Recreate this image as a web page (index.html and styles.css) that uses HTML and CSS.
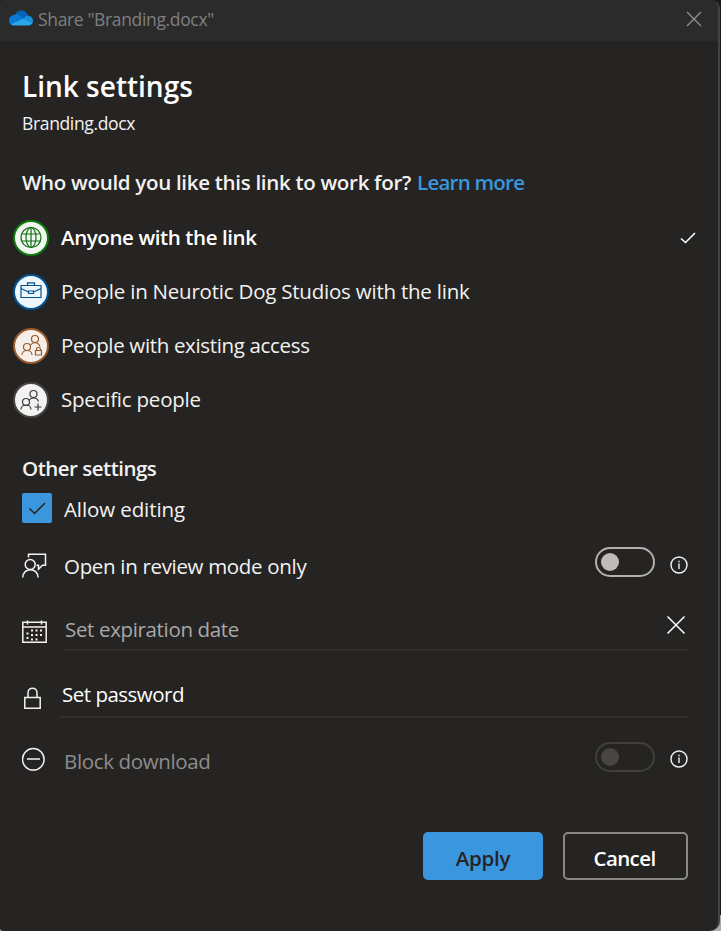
FILE: index.html
```html
<!DOCTYPE html>
<html lang="en">
<head>
<meta charset="utf-8">
<title>Share "Branding.docx"</title>
<link rel="stylesheet" href="styles.css">
</head>
<body>
<main class="dialog">
  <header class="titlebar">
    <svg class="cloud" viewBox="0 0 24 16" width="24" height="16">
      <path d="M6 5.200C7.300 2 9.500.5 12.500.5c3.200 0 5.800 1.900 6.500 5.300L14 10 5 7z" fill="#0563b8"/>
      <path d="M5.500 4.800c2.200-.5 4 .1 5.800 1.300l5 3.100L4 15.200C1.500 15 0 13 0 10.400 0 7.500 2.300 5.200 5.500 4.800z" fill="#0a7ad6"/>
      <path d="M14 9l3.500-3.200c3.500-.8 6.500 1.700 6.500 4.900 0 1-.2 1.800-.6 2.500z" fill="#1490df"/>
      <path d="M2 14.200L14.200 8.800l9.300 4.200c-.8 1.500-2.100 2.500-4 2.500h-14c-1.400 0-2.600-.5-3.500-1.300z" fill="#28a8ea"/>
    </svg>
    <span class="window-title">Share "Branding.docx"</span>
    <svg class="close" viewBox="0 0 16 16" width="16" height="16"><path d="M1 1l14 14M15 1L1 15"/></svg>
  </header>

  <section class="content">
    <h1>Link settings</h1>
    <p class="file">Branding.docx</p>
    <h2 class="question"><span class="ask">Who would you like this link to work for?</span><a class="learn">Learn more</a></h2>

    <ul class="options">
      <li class="option selected">
        <svg class="badge green" viewBox="0 0 36 36" width="36" height="36">
          <circle class="disc" cx="18" cy="18" r="17"/>
          <circle cx="18" cy="17.500" r="10"/><ellipse cx="18" cy="17.500" rx="5" ry="10"/>
          <path d="M9 14h18M9 21h18M18 7.500v20"/>
        </svg>
        <span class="t-anyone">Anyone with the link</span>
        <svg class="tick" viewBox="0 0 16 12" width="16" height="12"><path d="M1 6.500l4.500 4L15 1"/></svg>
      </li>
      <li class="option">
        <svg class="badge blue" viewBox="0 0 36 36" width="36" height="36">
          <circle class="disc" cx="18" cy="18" r="17"/>
          <path d="M8 11.500h20v12H8zM14.500 11.500V8.800h7v2.700M8 14.500l7.500 3.500M28 14.500L20.500 18M15.500 17h5v2.500h-5z"/>
        </svg>
        <span class="t-org">People in Neurotic Dog Studios with the link</span>
      </li>
      <li class="option">
        <svg class="badge brown" viewBox="0 0 36 36" width="36" height="36">
          <circle class="disc" cx="18" cy="18" r="17"/>
          <circle cx="22" cy="11" r="3.500"/><circle cx="14" cy="19" r="3.500"/>
          <path d="M9 27c0-6 10-6 10 0M17.500 17c2-3 8-3.500 9.500 1.500M22.500 22.500h6v4.500h-6zM23.500 22.500v-1.500c0-2 4-2 4 0v1.500"/>
        </svg>
        <span class="t-existing">People with existing access</span>
      </li>
      <li class="option">
        <svg class="badge gray" viewBox="0 0 36 36" width="36" height="36">
          <circle class="disc" cx="18" cy="18" r="17"/>
          <circle cx="20.500" cy="12" r="3.500"/><circle cx="13" cy="20" r="3.500"/>
          <path d="M8 27.500c0-6 10-6 10 0M16 18.500c2-3.500 8-3.500 9.500 1M25 21.500v7M21.500 25h7"/>
        </svg>
        <span class="t-specific">Specific people</span>
      </li>
    </ul>

    <h2 class="other">Other settings</h2>
    <div class="row allow">
      <span class="checkbox"><svg viewBox="0 0 18 14" width="18" height="14"><path d="M1.500 7.500l5 5L17 2"/></svg></span>
      <span class="t-allow">Allow editing</span>
    </div>
    <div class="row review">
      <svg class="icon" viewBox="0 0 26 26" width="26" height="26">
        <circle cx="8.200" cy="11.500" r="5"/>
        <path d="M.8 24.500c0-10.500 15.200-10.500 15.200 0M6.500 4.500V1.300h17v11h-3l-4 4v-4h-2"/>
      </svg>
      <span class="label t-open">Open in review mode only</span>
      <span class="toggle"></span>
      <svg class="info" viewBox="0 0 18 18" width="18" height="18"><circle cx="9" cy="9" r="8"/><path d="M9 7.500v5.500M9 4.700v1.500"/></svg>
    </div>
    <div class="row expiry">
      <svg class="icon" viewBox="0 0 26 26" width="26" height="26">
        <path d="M.8 3.300h23.400v20H.8zM.8 8h23.400M5.500 1.500v4M19.500 1.500v4"/>
        <path class="days" d="M5.500 13.500v8M10 10.500v11M14.500 10.500v11M19 10.500v8"/>
      </svg>
      <div class="field"><span class="label t-exp">Set expiration date</span>
        <svg class="clear" viewBox="0 0 20 20" width="20" height="20"><path d="M1.500 1.500l17 17M18.500 1.500l-17 17"/></svg>
      </div>
    </div>
    <div class="row password">
      <svg class="icon" viewBox="0 0 26 26" width="26" height="26"><path d="M2.800 11.500h15.400v10.700H2.800zM6 11.500V7c0-6.500 9-6.500 9 0v4.500"/></svg>
      <div class="field"><span class="label t-pass">Set password</span></div>
    </div>
    <div class="row block">
      <svg class="icon" viewBox="0 0 26 26" width="26" height="26"><circle cx="11.300" cy="12.300" r="10.800"/><path d="M5 12h13"/></svg>
      <span class="label t-block">Block download</span>
      <span class="toggle disabled"></span>
      <svg class="info" viewBox="0 0 18 18" width="18" height="18"><circle cx="9" cy="9" r="8"/><path d="M9 7.500v5.500M9 4.700v1.500"/></svg>
    </div>

    <footer class="actions">
      <button class="btn primary">Apply</button>
      <button class="btn secondary">Cancel</button>
    </footer>
  </section>
</main>
</body>
</html>
```
FILE: styles.css
```css
* { box-sizing: border-box; }
body {
  margin: 0;
  height: 931px;
  overflow: hidden;
  background: linear-gradient(#1a1a1a 915px, #aaa 915px);
  font-family: "Open Sans", "Noto Sans", sans-serif;
  font-size: 20.500px;
  color: #f3f2f1;
  white-space: nowrap;
}
h1, h2, p, ul { margin: 0; padding: 0; font-size: inherit; }
svg { fill: none; stroke: #f3f2f1; stroke-width: 1.500; flex: none; }

.dialog {
  width: 720px;
  height: 931px;
  background: #252423;
  border-right: 2px solid #434343;
  border-radius: 3px 9px 10px 3px;
  overflow: hidden;
}
.titlebar {
  height: 41px;
  display: flex;
  align-items: center;
  padding: 0 16px 3px 9px;
  background: #2b2b2b;
  color: #7f7f7f;
  font-size: 17.500px;
  letter-spacing: -.35px;
}
.cloud { stroke: none; margin: -2px 5px 0 0; }
.close { margin-left: auto; margin-top: -1px; stroke: #919191; stroke-width: 1.300; }
.content { padding: 25px 30px 0 22px; }
h1 { height: 40px; line-height: 40px; font-size: 28px; font-weight: 600; color: #fff; }
.file { height: 25px; margin-top: 5px; line-height: 25px; font-size: 17.500px; letter-spacing: -.35px; }
.question { display: flex; gap: 6px; height: 30px; margin-top: 31px; line-height: 30px; font-weight: 600; }
.ask { letter-spacing: -.3px; }
.learn { color: #3a96dd; letter-spacing: -.75px; }

.options { list-style: none; margin: 14px 0 0 -9px; }
.option { display: flex; align-items: center; gap: 12px; height: 54px; }
.option span { position: relative; top: -1px; }
.selected { font-weight: 600; color: #fff; }
.t-anyone { letter-spacing: -.4px; }
.t-org { letter-spacing: -.22px; }
.t-existing { letter-spacing: -.34px; }
.t-specific { letter-spacing: -.22px; }
.tick { margin-left: auto; margin-right: -8px; stroke: #fff; }
.badge { stroke-width: 1.200; }
.disc { stroke-width: 2; }
.green { stroke: #0f6f10; } .green .disc { fill: #f1f6f1; stroke: #107c10; }
.blue { stroke: #005495; } .blue .disc { fill: #eff6fc; }
.brown { stroke: #96592c; } .brown .disc { fill: #f6efe9; }
.gray { stroke: #393939; } .gray .disc { fill: #f3f2f1; stroke: #484644; }

.other { height: 28px; margin-top: 27px; line-height: 28px; font-weight: 600; letter-spacing: -.5px; }
.row { display: flex; align-items: center; }
.allow { height: 52px; gap: 12px; }
.t-allow { margin-top: 1px; letter-spacing: -.1px; }
.checkbox { width: 30px; height: 30px; margin-top: -1px; border-radius: 2px; background: #3a96dd; display: grid; place-items: center; }
.checkbox svg { stroke: #252423; }
.icon { margin-right: 16px; }
.review { height: 64px; }
.t-open { letter-spacing: -.32px; }
.toggle { width: 60px; height: 30px; margin: -8px 15px 0 auto; border: 2px solid #b3b1af; border-radius: 15px; display: flex; align-items: center; padding-left: 4px; }
.toggle::before { content: ""; width: 18px; height: 18px; border-radius: 50%; background: #bebbb8; }
.disabled { border-color: #403f3d; margin-top: -6px; }
.disabled::before { background: #484644; }
.info { margin: -3px .5px 0 -.5px; stroke-width: 1.400; }
.t-exp { letter-spacing: -.35px; margin-top: 2px; }
.t-pass { letter-spacing: -.5px; }
.t-block { letter-spacing: -.35px; margin-top: 2px; }
.field { flex: 1; display: flex; align-items: center; justify-content: space-between; border-bottom: 2px solid #302f2e; }
.expiry .field { height: 53px; padding: 9px 2px 0 1px; color: #a9a8a7; }
.expiry .icon { margin-top: 14px; }
.days { stroke-width: 2; stroke-dasharray: 2 2.500; }
.clear { stroke: #fff; margin-top: -6px; }
.password .icon { margin: 28px 11px 0 0; }
.password .field { height: 67px; padding: 21px 0 0 3px; color: #fff; }
.block { height: 84px; color: #8e8c8a; }
.actions { display: flex; justify-content: flex-end; gap: 20px; margin-top: 30px; }
.btn { height: 48px; padding: 4px 0 0; border: 0; border-radius: 5px; font: 600 20.500px "Open Sans", sans-serif; letter-spacing: -.3px; }
.primary { width: 120px; background: #3a96dd; color: #252423; }
.secondary { width: 125px; background: none; border: 2px solid #8a8886; color: #fff; letter-spacing: -.6px; padding-right: 2px; }
```
